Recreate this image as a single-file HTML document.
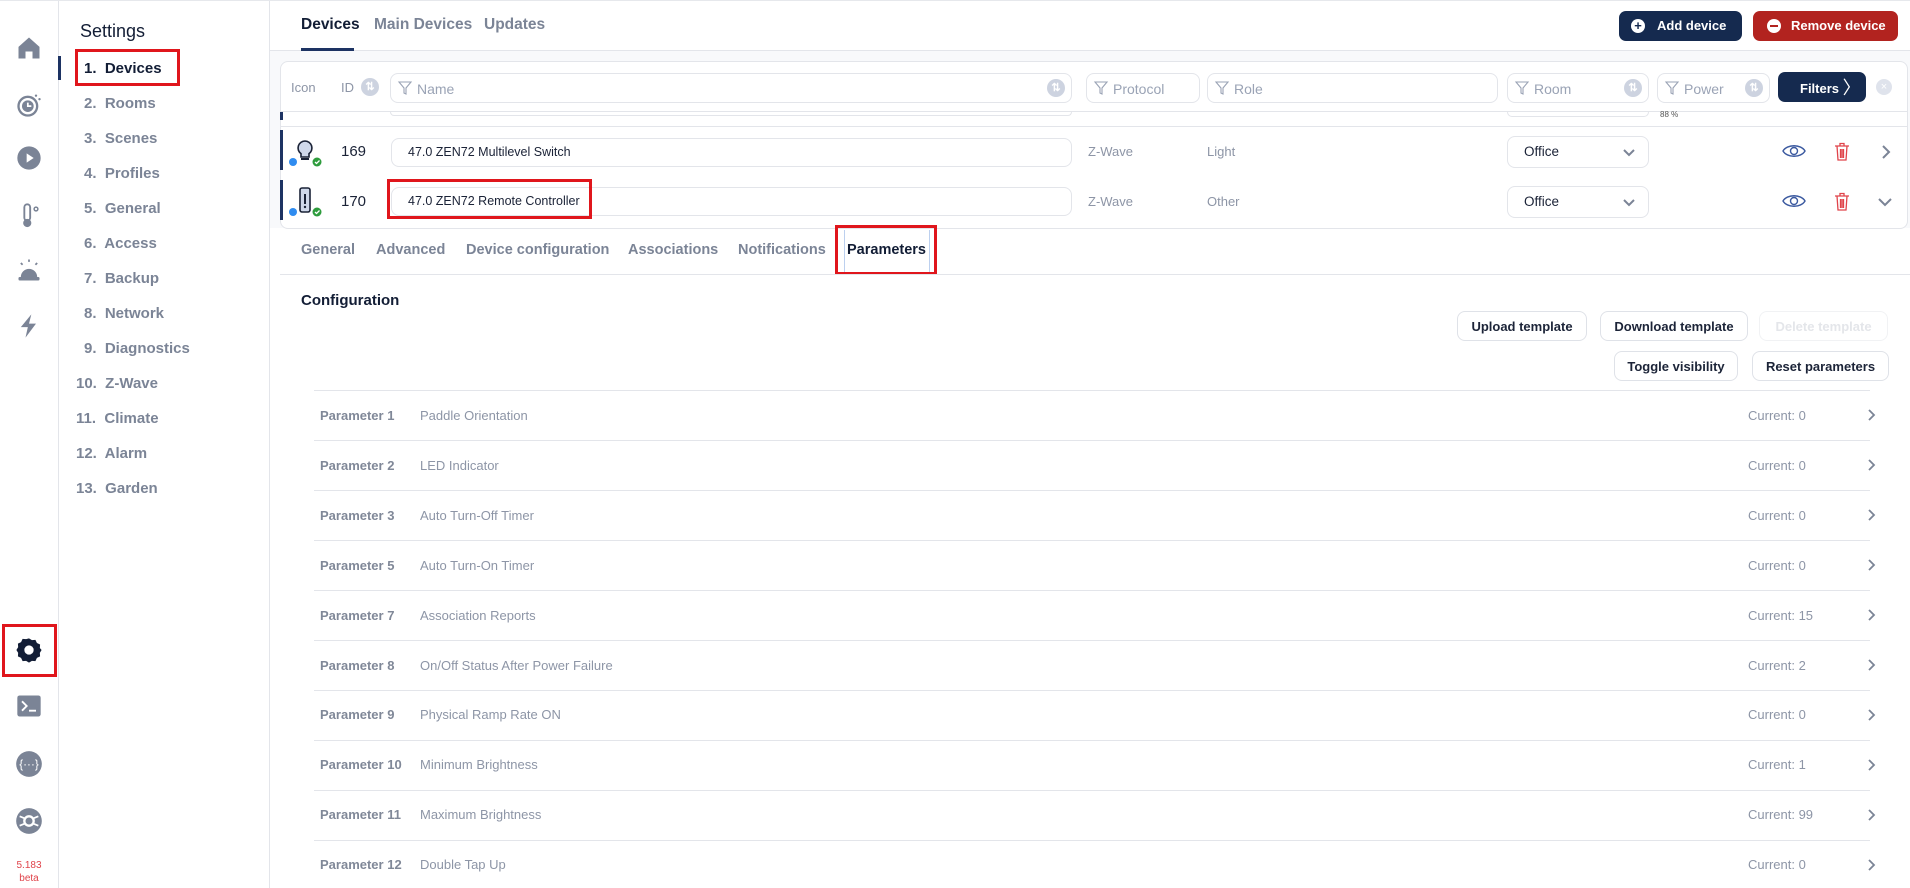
<!DOCTYPE html>
<html><head><meta charset="utf-8"><style>
*{box-sizing:border-box;margin:0;padding:0}
body{width:1910px;height:888px;overflow:hidden;background:#fff;font-family:"Liberation Sans",Arial,sans-serif;position:relative;color:#1a2236}
.a{position:absolute}
.nav{color:#7b8496;font-size:15px;font-weight:bold}
.inp{position:absolute;border:1px solid #e3e5ea;border-radius:8px;background:#fff}
.ph{color:#9aa3b5;font-size:14px;position:absolute;top:7px}
.sort{position:absolute;width:18px;height:18px;border-radius:50%;background:#cdd3e0;top:5px;color:#fff;font-size:11px;text-align:center;line-height:18px;font-weight:bold}
.btn{position:absolute;border:1px solid #dfe2e8;border-radius:8px;background:#fff;font-size:13px;font-weight:bold;color:#1c2438;text-align:center;line-height:29px}
.pr{position:absolute;left:314px;width:1556px;height:1px;background:#e3e5ea}
.pl{position:absolute;left:320px;font-size:13px;font-weight:bold;color:#808898}
.pn{position:absolute;left:420px;font-size:13px;color:#8d95a6}
.pc{position:absolute;left:1748px;font-size:13px;color:#8d95a6}
.tab{position:absolute;top:242px;font-size:14.5px;font-weight:bold;color:#7b8496}
.ico{position:absolute;left:15px;width:28px;height:28px}
</style></head><body>
<div class="a" style="left:58px;top:0;width:1px;height:888px;background:#e3e5ea"></div>
<div class="a" style="left:269px;top:0;width:1px;height:888px;background:#e3e5ea"></div>
<div class="a" style="left:0;top:0;width:1910px;height:1px;background:#e6e8ec"></div>
<svg class="ico" style="top:34px" viewBox="0 0 24 24"><path d="M12 3 3 11v10h6v-6h6v6h6V11z" fill="#7b8496"/></svg>
<svg class="ico" style="top:91px" viewBox="0 0 24 24"><circle cx="11" cy="13" r="8" fill="none" stroke="#7b8496" stroke-width="2"/><circle cx="11" cy="13" r="5" fill="#7b8496"/><path d="M11 10v3h3" stroke="#fff" stroke-width="1.5" fill="none"/><circle cx="18" cy="4" r="1" fill="#7b8496"/><circle cx="21" cy="7" r="1" fill="#7b8496"/></svg>
<svg class="ico" style="top:144px" viewBox="0 0 24 24"><circle cx="12" cy="12" r="10" fill="#7b8496"/><path d="M10 8v8l6-4z" fill="#fff"/></svg>
<svg class="ico" style="top:202px" viewBox="0 0 24 24"><rect x="8" y="2" width="5" height="14" rx="2.5" fill="none" stroke="#7b8496" stroke-width="1.6"/><circle cx="10.5" cy="18" r="3.5" fill="#7b8496"/><circle cx="18" cy="6" r="1.6" fill="none" stroke="#7b8496" stroke-width="1.3"/></svg>
<svg class="ico" style="top:256px" viewBox="0 0 24 24"><path d="M5 18a7 7 0 0 1 14 0z" fill="#7b8496"/><rect x="3" y="18" width="18" height="3" rx="1" fill="#7b8496"/><path d="M12 3v2M5 6l1.5 1.5M19 6l-1.5 1.5" stroke="#7b8496" stroke-width="1.5"/></svg>
<svg class="ico" style="top:312px" viewBox="0 0 24 24"><path d="M14 2 5 13h6l-2 9 9-12h-6z" fill="#7b8496"/></svg>
<svg class="ico" style="top:636px" viewBox="0 0 24 24"><path d="M12 2l2.5 1.5 3-.2 1.3 2.7 2.7 1.3-.2 3L22.8 12l-1.5 2.5.2 3-2.7 1.3-1.3 2.7-3-.2L12 22.8l-2.5-1.5-3 .2-1.3-2.7-2.7-1.3.2-3L1.2 12l1.5-2.5-.2-3 2.7-1.3L6.5 2.5l3 .2z" fill="#121d35"/><circle cx="12" cy="12" r="4" fill="#fff"/></svg>
<div class="a" style="left:2px;top:624px;width:55px;height:53px;border:3px solid #e0161c"></div>
<svg class="ico" style="top:692px" viewBox="0 0 24 24"><rect x="2" y="3" width="20" height="18" rx="2" fill="#7b8496"/><path d="M6 8l4 4-4 4M12 16h6" stroke="#fff" stroke-width="1.6" fill="none"/></svg>
<svg class="ico" style="top:750px" viewBox="0 0 24 24"><circle cx="12" cy="12" r="11" fill="#7b8496"/><text x="12" y="15.5" font-size="10" fill="#fff" text-anchor="middle" font-family="Liberation Sans">{···}</text></svg>
<svg class="ico" style="top:807px" viewBox="0 0 24 24"><circle cx="12" cy="12" r="11" fill="#7b8496"/><circle cx="12" cy="12" r="5" fill="#fff"/><circle cx="12" cy="12" r="3" fill="#7b8496"/><path d="M4 8l5 2M20 8l-5 2M4 16l5-2M20 16l-5-2" stroke="#fff" stroke-width="1.5"/></svg>
<div class="a" style="left:0;top:859px;width:58px;text-align:center;font-size:10px;color:#e0434a;line-height:13px">5.183<br>beta</div>
<div class="a" style="left:80px;top:21px;font-size:18px;color:#121d35">Settings</div>
<div class="a" style="left:58px;top:56px;width:3px;height:24px;background:#1d3363"></div>
<div class="a" style="left:75px;top:49px;width:105px;height:37px;border:3px solid #e0161c"></div>
<div class="a nav" style="left:84px;top:60px;color:#121d35">1.&nbsp; Devices</div>
<div class="a nav" style="left:84px;top:95px">2.&nbsp; Rooms</div>
<div class="a nav" style="left:84px;top:130px">3.&nbsp; Scenes</div>
<div class="a nav" style="left:84px;top:165px">4.&nbsp; Profiles</div>
<div class="a nav" style="left:84px;top:200px">5.&nbsp; General</div>
<div class="a nav" style="left:84px;top:235px">6.&nbsp; Access</div>
<div class="a nav" style="left:84px;top:270px">7.&nbsp; Backup</div>
<div class="a nav" style="left:84px;top:305px">8.&nbsp; Network</div>
<div class="a nav" style="left:84px;top:340px">9.&nbsp; Diagnostics</div>
<div class="a nav" style="left:76px;top:375px">10.&nbsp; Z-Wave</div>
<div class="a nav" style="left:76px;top:410px">11.&nbsp; Climate</div>
<div class="a nav" style="left:76px;top:445px">12.&nbsp; Alarm</div>
<div class="a nav" style="left:76px;top:480px">13.&nbsp; Garden</div>
<div class="a" style="left:270px;top:51px;width:1640px;height:837px;background:#f8f9fb"></div>
<div class="a" style="left:270px;top:50px;width:1640px;height:1px;background:#e3e5ea"></div>
<div class="a" style="left:301px;top:16px;font-size:15.5px;font-weight:bold;color:#121d35">Devices</div>
<div class="a" style="left:301px;top:48px;width:53px;height:3px;background:#1d3363"></div>
<div class="a" style="left:374px;top:16px;font-size:15.5px;font-weight:bold;color:#7b8496">Main Devices</div>
<div class="a" style="left:484px;top:16px;font-size:15.5px;font-weight:bold;color:#7b8496">Updates</div>
<div class="a" style="left:1619px;top:11px;width:123px;height:30px;border-radius:7px;background:#152a4f;color:#fff;font-size:13px;font-weight:bold;line-height:30px;padding-left:38px">Add device</div>
<div class="a" style="left:1631px;top:19px;width:14px;height:14px;border-radius:50%;background:#fff;color:#152a4f;font-size:13px;font-weight:bold;line-height:14px;text-align:center">+</div>
<div class="a" style="left:1753px;top:11px;width:145px;height:30px;border-radius:7px;background:#b2231f;color:#fff;font-size:13px;font-weight:bold;line-height:30px;padding-left:38px">Remove device</div>
<div class="a" style="left:1767px;top:19px;width:14px;height:14px;border-radius:50%;background:#fff"><div style="margin:6px 3px;height:2px;background:#b2231f"></div></div>
<div class="a" style="left:270px;top:228px;width:1640px;height:660px;background:#fff"></div>
<div class="a" style="left:280px;top:61px;width:1628px;height:168px;border:1px solid #e3e5ea;border-radius:8px;background:#fff"></div>
<div class="a" style="left:291px;top:80px;font-size:13px;color:#8d95a6">Icon</div>
<div class="a" style="left:341px;top:80px;font-size:13px;color:#8d95a6">ID</div>
<div class="sort" style="left:361px;top:78px">⇅</div>
<svg width="0" height="0" style="position:absolute"><defs><symbol id="f" viewBox="0 0 16 16"><path d="M2 2h12l-5 6v6l-2-1V8z" fill="none" stroke="#9aa3b5" stroke-width="1.1"/></symbol></defs></svg>
<div class="inp" style="left:390px;top:73px;width:682px;height:30px"><svg class="a" style="left:6px;top:6px" width="16" height="16"><use href="#f"/></svg><span class="ph" style="left:26px">Name</span><div class="sort" style="right:6px">⇅</div></div>
<div class="inp" style="left:1086px;top:73px;width:114px;height:30px"><svg class="a" style="left:6px;top:6px" width="16" height="16"><use href="#f"/></svg><span class="ph" style="left:26px">Protocol</span></div>
<div class="inp" style="left:1207px;top:73px;width:291px;height:30px"><svg class="a" style="left:6px;top:6px" width="16" height="16"><use href="#f"/></svg><span class="ph" style="left:26px">Role</span></div>
<div class="inp" style="left:1507px;top:73px;width:142px;height:30px"><svg class="a" style="left:6px;top:6px" width="16" height="16"><use href="#f"/></svg><span class="ph" style="left:26px">Room</span><div class="sort" style="right:6px">⇅</div></div>
<div class="inp" style="left:1657px;top:73px;width:113px;height:30px"><svg class="a" style="left:6px;top:6px" width="16" height="16"><use href="#f"/></svg><span class="ph" style="left:26px">Power</span><div class="sort" style="right:6px">⇅</div></div>
<div class="a" style="left:1778px;top:72px;width:88px;height:30px;border-radius:7px;background:#152a4f;color:#fff;font-size:13px;font-weight:bold;line-height:30px;padding-left:22px">Filters <span style="font-weight:normal;font-size:18px;position:relative;top:1px">&#x232A;</span></div>
<div class="a" style="left:1876px;top:79px;width:16px;height:16px;border-radius:50%;background:#dfe3ec;color:#fff;font-size:11px;text-align:center;line-height:16px">×</div>
<div class="a" style="left:281px;top:111px;width:1626px;height:1px;background:#e3e5ea"></div>
<div class="a" style="left:280px;top:112px;width:3px;height:8px;background:#1d3363"></div>
<div class="a" style="left:390px;top:112px;width:682px;height:4px;border:1px solid #e3e5ea;border-top:0;border-radius:0 0 8px 8px"></div>
<div class="a" style="left:1507px;top:112px;width:142px;height:5px;border:1px solid #e3e5ea;border-top:0;border-radius:0 0 8px 8px"></div>
<div class="a" style="left:1660px;top:110px;font-size:8px;color:#555">88 %</div>
<div class="a" style="left:281px;top:126px;width:1626px;height:1px;background:#e3e5ea"></div>
<div class="a" style="left:280px;top:130px;width:3px;height:40px;background:#1d3363"></div>
<div class="a" style="left:280px;top:180px;width:3px;height:40px;background:#1d3363"></div>
<svg class="a" style="left:287px;top:138px" width="36" height="30" viewBox="0 0 36 30"><path d="M18 3a7 7 0 0 0-4 12.7V19h8v-3.3A7 7 0 0 0 18 3z" fill="#cfd8ea" stroke="#1a2236" stroke-width="1.6"/><rect x="14" y="20" width="8" height="2" fill="#1a2236"/><circle cx="6" cy="24" r="4" fill="#2f8cf0"/><circle cx="30" cy="24" r="4.5" fill="#2e9c3d"/><path d="M28 24l1.5 1.5 3-3" stroke="#fff" stroke-width="1.3" fill="none"/></svg>
<svg class="a" style="left:287px;top:186px" width="36" height="32" viewBox="0 0 36 32"><rect x="13" y="2" width="10" height="24" rx="2" fill="#cfd8ea" stroke="#1a2236" stroke-width="1.6"/><rect x="17" y="8" width="2" height="10" fill="#1a2236"/><circle cx="18" cy="21" r="1.2" fill="#1a2236"/><circle cx="6" cy="26" r="4" fill="#2f8cf0"/><circle cx="30" cy="26" r="4.5" fill="#2e9c3d"/><path d="M28 26l1.5 1.5 3-3" stroke="#fff" stroke-width="1.3" fill="none"/></svg>
<div class="a" style="left:341px;top:143px;font-size:15px;color:#1a2236">169</div>
<div class="a" style="left:341px;top:193px;font-size:15px;color:#1a2236">170</div>
<div class="inp" style="left:391px;top:138px;width:681px;height:29px"><span class="a" style="left:16px;top:6px;font-size:12.5px;color:#1a2236">47.0 ZEN72 Multilevel Switch</span></div>
<div class="inp" style="left:391px;top:187px;width:681px;height:29px"><span class="a" style="left:16px;top:6px;font-size:12.5px;color:#1a2236">47.0 ZEN72 Remote Controller</span></div>
<div class="a" style="left:387px;top:179px;width:205px;height:40px;border:3px solid #e0161c"></div>
<div class="a" style="left:1088px;top:144px;font-size:13px;color:#8d95a6">Z-Wave</div>
<div class="a" style="left:1088px;top:194px;font-size:13px;color:#8d95a6">Z-Wave</div>
<div class="a" style="left:1207px;top:144px;font-size:13px;color:#8d95a6">Light</div>
<div class="a" style="left:1207px;top:194px;font-size:13px;color:#8d95a6">Other</div>
<div class="inp" style="left:1507px;top:136px;width:142px;height:32px"><span class="a" style="left:16px;top:7px;font-size:13.5px;color:#1a2236">Office</span><svg class="a" style="right:12px;top:10px" width="14" height="12"><path d="M2 3l5 5 5-5" stroke="#7b8496" stroke-width="2" fill="none"/></svg></div>
<div class="inp" style="left:1507px;top:186px;width:142px;height:32px"><span class="a" style="left:16px;top:7px;font-size:13.5px;color:#1a2236">Office</span><svg class="a" style="right:12px;top:10px" width="14" height="12"><path d="M2 3l5 5 5-5" stroke="#7b8496" stroke-width="2" fill="none"/></svg></div>
<svg class="a" style="left:1782px;top:143px" width="24" height="16"><path d="M1 8C5 1 19 1 23 8C19 15 5 15 1 8z" fill="none" stroke="#3c5aa0" stroke-width="1.4"/><circle cx="12" cy="8" r="3.5" fill="none" stroke="#3c5aa0" stroke-width="1.4"/></svg>
<svg class="a" style="left:1782px;top:193px" width="24" height="16"><path d="M1 8C5 1 19 1 23 8C19 15 5 15 1 8z" fill="none" stroke="#3c5aa0" stroke-width="1.4"/><circle cx="12" cy="8" r="3.5" fill="none" stroke="#3c5aa0" stroke-width="1.4"/></svg>
<svg class="a" style="left:1834px;top:142px" width="16" height="19"><path d="M1 4h14M6 4V1.5h4V4M3 4l1 14h8l1-14M6.5 7v9M8 7v9M9.5 7v9" stroke="#e0434a" stroke-width="1.3" fill="none"/></svg>
<svg class="a" style="left:1834px;top:192px" width="16" height="19"><path d="M1 4h14M6 4V1.5h4V4M3 4l1 14h8l1-14M6.5 7v9M8 7v9M9.5 7v9" stroke="#e0434a" stroke-width="1.3" fill="none"/></svg>
<svg class="a" style="left:1880px;top:144px" width="12" height="16"><path d="M3 2l6 6-6 6" stroke="#7b8496" stroke-width="2" fill="none"/></svg>
<svg class="a" style="left:1877px;top:196px" width="16" height="12"><path d="M2 3l6 6 6-6" stroke="#7b8496" stroke-width="2" fill="none"/></svg>
<div class="tab" style="left:301px">General</div>
<div class="tab" style="left:376px">Advanced</div>
<div class="tab" style="left:466px">Device configuration</div>
<div class="tab" style="left:628px">Associations</div>
<div class="tab" style="left:738px">Notifications</div>
<div class="tab" style="left:847px;color:#121d35">Parameters</div>
<div class="a" style="left:844px;top:230px;width:1px;height:44px;background:#bcd0ef"></div>
<div class="a" style="left:929px;top:230px;width:1px;height:44px;background:#bcd0ef"></div>
<div class="a" style="left:835px;top:225px;width:102px;height:50px;border:3px solid #e0161c"></div>
<div class="a" style="left:280px;top:274px;width:1630px;height:1px;background:#e3e5ea"></div>
<div class="a" style="left:301px;top:292px;font-size:15px;font-weight:bold;color:#121d35">Configuration</div>
<div class="btn" style="left:1457px;top:311px;width:130px;height:30px">Upload template</div>
<div class="btn" style="left:1600px;top:311px;width:148px;height:30px">Download template</div>
<div class="btn" style="left:1759px;top:311px;width:129px;height:30px;color:#e4e6ea;border-color:#f1f2f4">Delete template</div>
<div class="btn" style="left:1614px;top:351px;width:124px;height:30px">Toggle visibility</div>
<div class="btn" style="left:1752px;top:351px;width:137px;height:30px">Reset parameters</div>
<div class="pr" style="top:390px"></div>
<div class="pl" style="top:408px">Parameter 1</div><div class="pn" style="top:408px">Paddle Orientation</div><div class="pc" style="top:408px">Current: 0</div>
<div class="pr" style="top:440px"></div>
<div class="pl" style="top:458px">Parameter 2</div><div class="pn" style="top:458px">LED Indicator</div><div class="pc" style="top:458px">Current: 0</div>
<div class="pr" style="top:490px"></div>
<div class="pl" style="top:508px">Parameter 3</div><div class="pn" style="top:508px">Auto Turn-Off Timer</div><div class="pc" style="top:508px">Current: 0</div>
<div class="pr" style="top:540px"></div>
<div class="pl" style="top:558px">Parameter 5</div><div class="pn" style="top:558px">Auto Turn-On Timer</div><div class="pc" style="top:558px">Current: 0</div>
<div class="pr" style="top:590px"></div>
<div class="pl" style="top:608px">Parameter 7</div><div class="pn" style="top:608px">Association Reports</div><div class="pc" style="top:608px">Current: 15</div>
<div class="pr" style="top:640px"></div>
<div class="pl" style="top:658px">Parameter 8</div><div class="pn" style="top:658px">On/Off Status After Power Failure</div><div class="pc" style="top:658px">Current: 2</div>
<div class="pr" style="top:690px"></div>
<div class="pl" style="top:707px">Parameter 9</div><div class="pn" style="top:707px">Physical Ramp Rate ON</div><div class="pc" style="top:707px">Current: 0</div>
<div class="pr" style="top:740px"></div>
<div class="pl" style="top:757px">Parameter 10</div><div class="pn" style="top:757px">Minimum Brightness</div><div class="pc" style="top:757px">Current: 1</div>
<div class="pr" style="top:790px"></div>
<div class="pl" style="top:807px">Parameter 11</div><div class="pn" style="top:807px">Maximum Brightness</div><div class="pc" style="top:807px">Current: 99</div>
<div class="pr" style="top:840px"></div>
<div class="pl" style="top:857px">Parameter 12</div><div class="pn" style="top:857px">Double Tap Up</div><div class="pc" style="top:857px">Current: 0</div>
<svg class="a" style="left:1866px;top:408px" width="12" height="470"><g stroke="#7b8496" stroke-width="1.8" fill="none"><path d="M3 2l5 5-5 5"/><path d="M3 52l5 5-5 5"/><path d="M3 102l5 5-5 5"/><path d="M3 152l5 5-5 5"/><path d="M3 202l5 5-5 5"/><path d="M3 252l5 5-5 5"/><path d="M3 302l5 5-5 5"/><path d="M3 352l5 5-5 5"/><path d="M3 402l5 5-5 5"/><path d="M3 452l5 5-5 5"/></g></svg>
</body></html>
